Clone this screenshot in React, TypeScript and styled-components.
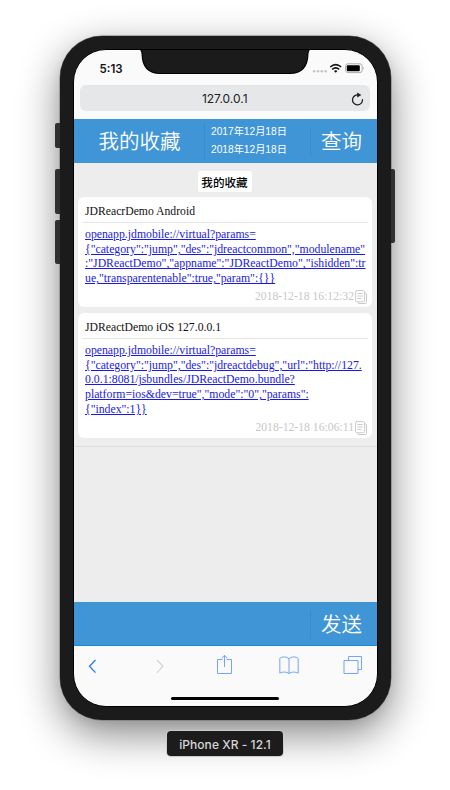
import React from "react";
import styled, { createGlobalStyle } from "styled-components";

const Global = createGlobalStyle`
  * { box-sizing: border-box; }
  body { margin: 0; background: #fff; overflow: hidden; }
`;

const sans = `"Liberation Sans", "Noto Sans CJK SC", sans-serif`;

const Stage = styled.div`
  width: 450px;
  height: 790px;
  padding-top: 36px;
  display: flex;
  flex-direction: column;
  align-items: center;
  overflow: hidden;
  font-family: ${sans};
`;

const Phone = styled.div`
  position: relative;
  width: 331px;
  height: 684px;
  flex: none;
  padding: 13px;
  background: #1b1b1b;
  border-radius: 42px;
  box-shadow: 0 0 0 0.5px #777, 0 14px 42px rgba(0, 0, 0, 0.48), 0 4px 12px rgba(0, 0, 0, 0.06);
`;

const SideButton = styled.i<{ $side: "left" | "right"; $top: number; $height: number }>`
  position: absolute;
  ${(p) => p.$side}: ${(p) => (p.$side === "left" ? -5 : -4)}px;
  top: ${(p) => p.$top}px;
  width: ${(p) => (p.$side === "left" ? 5 : 4)}px;
  height: ${(p) => p.$height}px;
  background: #303030;
  border-radius: ${(p) => (p.$side === "left" ? "2px 0 0 2px" : "0 2px 2px 0")};
`;

const Screen = styled.div`
  position: relative;
  width: 305px;
  height: 658px;
  display: flex;
  flex-direction: column;
  overflow: hidden;
  background: #fafafa;
  border: 1px solid #000;
  border-radius: 33px;
`;

const Notch = styled.svg`
  position: absolute;
  left: 64px;
  top: -1px;
`;

const StatusBar = styled.div`
  height: 35px;
  flex: none;
  display: flex;
  justify-content: space-between;
  padding: 12px 12px 0 26px;
`;

const Clock = styled.span`
  font: 600 11.5px/14px Inter, sans-serif;
  color: #111;
`;

const AddressBar = styled.div`
  height: 26px;
  flex: none;
  margin: 0 7px 0 6.5px;
  border-radius: 6px;
  background: #e6e7e9;
  display: grid;
  grid-template-columns: 1fr auto 1fr;
  align-items: center;
  font: 12px/27px Inter, sans-serif;
  color: #222;
  svg { justify-self: end; margin-right: 6px; }
`;

const BlueBar = styled.div<{ $gap: number; $edge?: boolean }>`
  height: 44px;
  flex: none;
  margin-top: ${(p) => p.$gap}px;
  display: flex;
  align-items: center;
  background: #4095d6;
  box-shadow: ${(p) => (p.$edge ? "inset 0 -1px #1787d9" : "none")};
  color: #fff;
`;

const BarLabel = styled.div<{ $width?: number }>`
  width: ${(p) => (p.$width ? `${p.$width}px` : "auto")};
  flex: ${(p) => (p.$width ? "none" : "1")};
  padding: ${(p) => (p.$width ? "0 0 0 2px" : "0 4px 0 0")};
  text-align: center;
  font: 350 20.5px/42px "Noto Sans CJK SC", sans-serif;
  height: 44px;
  white-space: nowrap;
`;

const Divider = styled.i<{ $height: number }>`
  width: 1px;
  height: ${(p) => p.$height}px;
  background: #3a8ccc;
`;

const Dates = styled.div`
  width: 105px;
  padding-left: 6.5px;
  font: 10.2px/18px ${sans};
  white-space: nowrap;
`;

const Page = styled.div`
  height: 439px;
  flex: none;
  background: #ededed;
`;

const Feed = styled.div`
  height: 283.5px;
  padding: 8px 4.5px 0 4.5px;
  display: flex;
  flex-direction: column;
  align-items: center;
  border-bottom: 1px solid #dcdcdc;
`;

const Tag = styled.div`
  width: 54px;
  height: 21px;
  margin: 0 1px 5px 0;
  background: #fff;
  border-radius: 2px;
  text-align: center;
  font: 500 11.6px/23px "Noto Sans CJK SC", sans-serif;
  color: #000;
`;

const Card = styled.article<{ $height: number }>`
  width: 294px;
  height: ${(p) => p.$height}px;
  flex: none;
  margin-bottom: 6px;
  padding: 0 4px;
  background: #fff;
  border-radius: 6px;
  display: flex;
  flex-direction: column;
  font-family: "Liberation Serif", serif;
`;

const CardTitle = styled.h2`
  margin: 0 0 5px;
  padding-left: 3px;
  height: 26px;
  border-bottom: 1px solid #e7e7e7;
  font-size: 11.7px;
  line-height: 29px;
  font-weight: 400;
  color: #111;
`;

const CardLink = styled.a`
  padding-left: 3px;
  font-size: 11.75px;
  line-height: 14.7px;
  color: #1818e8;
  text-decoration: underline;
  white-space: pre;
`;

const Meta = styled.footer`
  margin-top: auto;
  height: 21px;
  display: flex;
  justify-content: flex-end;
  align-items: center;
  font-size: 11.7px;
  color: #c8c8c8;
  svg { margin: 0 1px 0 1px; }
`;

const Toolbar = styled.nav`
  height: 46px;
  flex: none;
  display: grid;
  grid-template-columns: 67px 63px 64px 64px auto;
  align-items: start;
  padding: 8px 0 0 11px;
`;

const HomeBar = styled.i`
  width: 108px;
  height: 3px;
  margin: 5px auto 0;
  border-radius: 2px;
  background: #000;
`;

const Caption = styled.div`
  width: 116px;
  height: 25px;
  flex: none;
  margin-top: 11px;
  position: relative;
  border-radius: 4px;
  background: #1c1c1c;
  box-shadow: 0 0 0 1px #ccc;
  color: #d6d6d6;
  text-align: center;
  font: 500 12px/27px Inter, sans-serif;
  letter-spacing: 0.05px;
  white-space: nowrap;
`;

const CopyIcon = () => (
  <svg width="12" height="14" viewBox="0 0 12 14" fill="none" stroke="#cbcbcb" strokeLinecap="round">
    <path d="M10 3h.5q1 0 1 1v8.5q0 1-1 1H4q-1 0-1-1V12" />
    <rect x=".6" y=".6" width="9" height="11.2" rx="1.2" />
    <path d="M2.8 3.5h4.6M2.8 6h4.6M2.8 8.5h3.2" />
  </svg>
);

const StatusIcons = () => (
  <svg width="53" height="14" viewBox="0 0 53 14">
    <g fill="#c4c4c6">
      <circle cx="2.2" cy="9.2" r="1.25" /><circle cx="6" cy="9.2" r="1.25" />
      <circle cx="9.8" cy="9.2" r="1.25" /><circle cx="13.6" cy="9.2" r="1.25" />
    </g>
    <g fill="none" stroke="#111" strokeWidth="1.6">
      <path d="M18.2 5Q23.7.2 29.2 5" />
      <path d="M20.2 7.4Q23.7 4.3 27.2 7.4" />
    </g>
    <path d="M21.9 8.9q1.8-1.4 3.6 0L23.7 10.8z" fill="#111" />
    <rect x="33.6" y="1.8" width="16.6" height="8.8" rx="2.4" fill="none" stroke="#aaa" />
    <rect x="34.8" y="3.2" width="13" height="6" rx="1" fill="#000" />
    <path d="M51.3 4.7q1.6 1.5 0 3z" fill="#aaa" />
  </svg>
);

const cards = [
  {
    title: "JDReacrDemo Android",
    height: 110,
    time: "2018-12-18 16:12:32",
    lines: [
      "openapp.jdmobile://virtual?params=",
      '{"category":"jump","des":"jdreactcommon","modulename"',
      ':"JDReactDemo","appname":"JDReactDemo","ishidden":tr',
      'ue,"transparentenable":true,"param":{}}',
    ],
  },
  {
    title: "JDReactDemo iOS 127.0.0.1",
    height: 125,
    time: "2018-12-18 16:06:11",
    lines: [
      "openapp.jdmobile://virtual?params=",
      '{"category":"jump","des":"jdreactdebug","url":"http://127.',
      "0.0.1:8081/jsbundles/JDReactDemo.bundle?",
      'platform=ios&dev=true","mode":"0","params":',
      '{"index":1}}',
    ],
  },
];

export default function App() {
  return (
    <>
      <Global />
      <Stage>
        <Phone>
          <SideButton $side="left" $top={86.5} $height={25.5} />
          <SideButton $side="left" $top={133} $height={44.5} />
          <SideButton $side="left" $top={183.5} $height={44.5} />
          <SideButton $side="right" $top={133} $height={73.5} />
          <Screen>
            <StatusBar>
              <Clock>5:13</Clock>
              <StatusIcons />
            </StatusBar>
            <Notch width="174" height="26" viewBox="0 0 174 26">
              <path d="M0 0h174q-3.5 .6-3.5 5Q170 25 152 25H22Q4 25 3.5 5 3.5 .6 0 0z" fill="#000" />
              <path d="M1 0h172q-3.5 .4-3.5 4.5Q169 24 151.5 24H22.5Q5 24 4.5 4.5 4.5 .4 1 0z" fill="#1b1b1b" />
            </Notch>
            <AddressBar>
              <span />
              <span>127.0.0.1</span>
              <svg width="13" height="14" viewBox="0 0 13 14">
                <path d="M7.5 3A5 5 0 1 0 11.5 7.6" fill="none" stroke="#222" strokeWidth="1.3" strokeLinecap="round" />
                <path d="M6.2.6 10.4 3 6.2 5.6z" fill="#222" />
              </svg>
            </AddressBar>
            <BlueBar $gap={8}>
              <BarLabel $width={130}>我的收藏</BarLabel>
              <Divider $height={37} />
              <Dates>
                <div>2017年12月18日</div>
                <div>2018年12月18日</div>
              </Dates>
              <Divider $height={29} />
              <BarLabel>查询</BarLabel>
            </BlueBar>
            <Page>
              <Feed>
                <Tag>我的收藏</Tag>
                {cards.map((c) => (
                  <Card key={c.title} $height={c.height}>
                    <CardTitle>{c.title}</CardTitle>
                    <CardLink>{c.lines.join("\n")}</CardLink>
                    <Meta>
                      <span>{c.time}</span>
                      <CopyIcon />
                    </Meta>
                  </Card>
                ))}
              </Feed>
            </Page>
            <BlueBar $gap={0} $edge>
              <BarLabel $width={236} />
              <Divider $height={29} />
              <BarLabel>发送</BarLabel>
            </BlueBar>
            <Toolbar>
              <svg width="14" height="24" fill="none" stroke="#2779f5" strokeWidth="1.3"><path d="M10.5 6 4.500 12.300 10.500 18.600" /></svg>
              <svg width="14" height="24" fill="none" stroke="#d0d2d5" strokeWidth="1.1"><path d="M5 6 11 12.3 5 18.6" /></svg>
              <svg width="18" height="24" fill="none" stroke="#72a5fb"><path d="M7.5 5.500h-5v14h14v-14h-5M9.500 13V1.500M6.700 4.200 9.500 1.300l2.800 2.900" /></svg>
              <svg width="20" height="24" fill="none" stroke="#72a5fb"><path d="M10 19.500V5C8 2.300 3 2.300.8 4.500v14.700C3 17.600 8 17.600 10 19.500 12 17.600 17 17.600 19.200 19.200V4.500C17 2.300 12 2.300 10 5" /></svg>
              <svg width="20" height="24" fill="none" stroke="#72a5fb"><path d="M5.500 6.500v-4h13v13h-3.500M1 6.500h14v13H1z" /></svg>
            </Toolbar>
            <HomeBar />
          </Screen>
        </Phone>
        <Caption>iPhone XR - 12.1</Caption>
      </Stage>
    </>
  );
}
